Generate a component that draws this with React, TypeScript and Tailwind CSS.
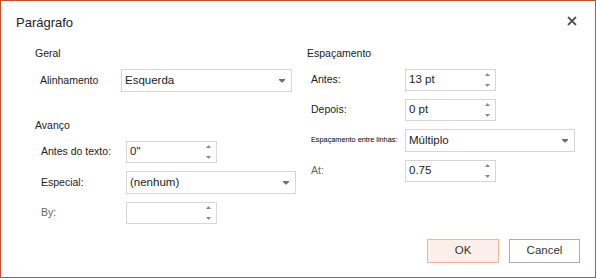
import React from "react";

const font = "font-['Liberation_Sans',Arial,sans-serif]";

function DownArrow() {
  return (
    <svg width="6" height="4" viewBox="0 0 6 4" aria-hidden="true">
      <path d="M0 0H6V1L3.5 3.5H2.5L0 1Z" fill="#707070" />
    </svg>
  );
}

function Spin({ value, w = "w-[91px]" }: { value: string; w?: string }) {
  return (
    <div className={`flex h-[22px] ${w} items-center justify-between border border-[#d6d6d6] bg-white pl-[3px] pr-[5px]`}>
      <span className="text-[11.5px] leading-none text-[#222]">{value}</span>
      <span className="flex flex-col items-center gap-[6px]">
        <svg width="5" height="4" viewBox="0 0 5 4" aria-hidden="true">
          <path d="M2.5 0L5 3H0Z" fill="#8a8a8a" />
        </svg>
        <svg width="5" height="4" viewBox="0 0 5 4" aria-hidden="true">
          <path d="M0 1H5L2.5 4Z" fill="#8a8a8a" />
        </svg>
      </span>
    </div>
  );
}

function Select({ value, w = "w-[170px]" }: { value: string; w?: string }) {
  return (
    <div className={`flex h-[23px] ${w} items-center justify-between border border-[#d6d6d6] bg-white pl-[3px] pr-[6px]`}>
      <span className="text-[11.5px] leading-none text-[#222]">{value}</span>
      <DownArrow />
    </div>
  );
}

function Row({
  label,
  labelW,
  children,
  muted,
  small,
}: {
  label: string;
  labelW: string;
  children: React.ReactNode;
  muted?: boolean;
  small?: boolean;
}) {
  return (
    <div className="flex items-center">
      <span
        className={`${labelW} shrink-0 ${small ? "text-[7.3px] text-black" : "text-[10.5px]"} ${
          muted ? "text-[#666]" : "text-[#222]"
        }`}
      >
        {label}
      </span>
      {children}
    </div>
  );
}

export default function App() {
  return (
    <div className={`flex h-[278px] w-[596px] flex-col border border-[#c5502f] bg-white ${font}`}>
      <div className="flex items-start justify-between pl-[15px] pr-[18px] pt-[14px]">
        <h1 className="text-[13px] leading-4 text-[#222]">Parágrafo</h1>
        <svg className="mt-[1px]" width="10" height="10" viewBox="0 0 10 10" aria-hidden="true">
          <path d="M1 1L9 9M9 1L1 9" stroke="#555" strokeWidth="1.8" />
        </svg>
      </div>

      <div className="mt-[14px] flex">
        <section className="flex w-[306px] shrink-0 flex-col pl-[34px]">
          <h2 className="h-4 text-[10.5px] leading-4 text-[#222]">Geral</h2>
          <div className="mt-[8px] pl-[5px]">
            <Row label="Alinhamento" labelW="w-[81px]">
              <Select value="Esquerda" w="w-[171px]" />
            </Row>
          </div>
          <h2 className="mt-[25px] h-4 text-[10.5px] leading-4 text-[#222]">Avanço</h2>
          <div className="mt-[8px] flex flex-col gap-[8px] pl-[6px]">
            <Row label="Antes do texto:" labelW="w-[85px]">
              <Spin value={'0"'} />
            </Row>
            <Row label="Especial:" labelW="w-[85px]">
              <Select value="(nenhum)" />
            </Row>
            <Row label="By:" labelW="w-[85px]" muted>
              <Spin value="" />
            </Row>
          </div>
        </section>

        <section className="flex flex-1 flex-col">
          <h2 className="h-4 text-[10.5px] leading-4 text-[#222]">Espaçamento</h2>
          <div className="mt-[8px] flex flex-col gap-[8px] pl-[4px]">
            <Row label="Antes:" labelW="w-[94px]">
              <Spin value="13 pt" />
            </Row>
            <Row label="Depois:" labelW="w-[94px]">
              <Spin value="0 pt" />
            </Row>
            <Row label="Espaçamento entre linhas:" labelW="w-[94px]" small>
              <Select value="Múltiplo" />
            </Row>
            <Row label="At:" labelW="w-[94px]" muted>
              <Spin value="0.75" />
            </Row>
          </div>
        </section>
      </div>

      <div className="mt-auto mb-[14px] flex justify-end gap-[10px] pr-[15px]">
        <button className="flex h-[24px] w-[72px] items-center justify-center border border-[#f3b49c] bg-[#fcefe9] text-[11.5px] text-[#333]">
          OK
        </button>
        <button className="flex h-[24px] w-[71px] items-center justify-center border border-[#adadad] bg-white text-[11.5px] text-[#333]">
          Cancel
        </button>
      </div>
    </div>
  );
}
